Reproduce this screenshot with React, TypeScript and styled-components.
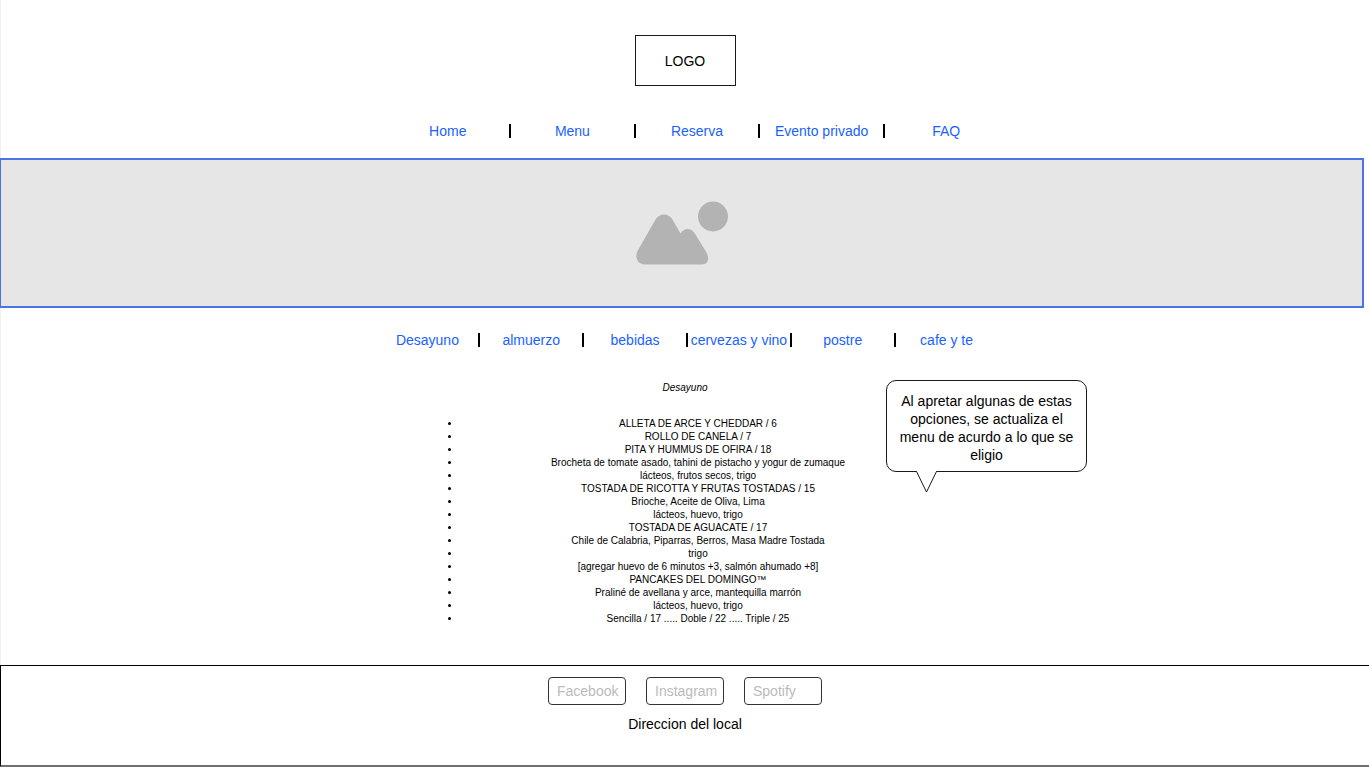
import React from "react";
import styled, { createGlobalStyle } from "styled-components";

const GlobalStyle = createGlobalStyle`
  *, *::before, *::after { box-sizing: border-box; }
  body {
    margin: 0;
    background: #ffffff;
    color: #000000;
    font-family: "Liberation Sans", Arial, sans-serif;
    font-size: 14px;
  }
`;

const Page = styled.div`
  display: flex;
  flex-direction: column;
  min-width: 720px;
`;

const Body = styled.div`
  display: flex;
  flex-direction: column;
  align-items: center;
  border-left: 1px solid #f0f0f0;
`;

const Logo = styled.div`
  display: grid;
  place-items: center;
  width: 101px;
  height: 51px;
  margin: 35px 0 38px;
  border: 1px solid #1a1a1a;
`;

const NavBar = styled.nav<{ $columns: number; $indent: number }>`
  display: grid;
  grid-template-columns: repeat(${(p) => p.$columns}, 1fr);
  width: 623px;
  margin-left: ${(p) => p.$indent}px;
`;

const NavLink = styled.a`
  border-left: 2px solid #000000;
  color: #1a62ff;
  line-height: 14px;
  text-align: center;
  text-decoration: none;
  white-space: nowrap;

  &:first-child {
    border-left-color: transparent;
  }
`;

const Hero = styled.div`
  align-self: stretch;
  display: grid;
  place-items: center;
  height: 150px;
  margin: 20px 5px 25px -1px;
  border: 2px solid #4a74e2;
  border-left-width: 1px;
  background: #e6e6e6;
`;

const MenuSection = styled.section`
  position: relative;
  width: 500px;
  padding: 34px 0 40px;
`;

const MenuTitle = styled.h1`
  margin: 0 0 23px;
  font-size: 10px;
  font-style: italic;
  font-weight: 400;
  line-height: 13px;
  text-align: center;
`;

const MenuList = styled.ul`
  margin: 0;
  padding: 0 0 0 26px;
  font-size: 10px;
  line-height: 13px;
  text-align: center;
`;

const Bubble = styled.aside`
  position: absolute;
  top: 33px;
  left: 451px;
  width: 201px;
  padding: 11px 10px 7px;
  border: 1px solid #1a1a1a;
  border-radius: 10px;
  background: #ffffff;
  line-height: 18px;
  text-align: center;
`;

const BubbleTail = styled.svg`
  position: absolute;
  top: 100%;
  left: 29px;
  display: block;
  overflow: visible;
`;

const Footer = styled.footer`
  display: flex;
  flex-direction: column;
  align-items: center;
  gap: 10px;
  padding: 11px 0 32px;
  border: 1px solid #000000;
  border-right: 0;
  border-bottom: 2px solid #707070;
`;

const Socials = styled.div`
  display: flex;
  gap: 20px;
`;

const SocialInput = styled.input`
  width: 78px;
  height: 28px;
  padding: 0 5px 0 8px;
  border: 1px solid #333333;
  border-radius: 4px;
  background: #ffffff;
  color: #000000;
  font: inherit;

  &::placeholder {
    color: #bbbbbb;
    opacity: 1;
  }
`;

const Address = styled.address`
  font-style: normal;
  line-height: 18px;
`;

const pages = ["Home", "Menu", "Reserva", "Evento privado", "FAQ"];
const categories = ["Desayuno", "almuerzo", "bebidas", "cervezas y vino", "postre", "cafe y te"];
const dishes = [
  "ALLETA DE ARCE Y CHEDDAR / 6",
  "ROLLO DE CANELA / 7",
  "PITA Y HUMMUS DE OFIRA / 18",
  "Brocheta de tomate asado, tahini de pistacho y yogur de zumaque",
  "lácteos, frutos secos, trigo",
  "TOSTADA DE RICOTTA Y FRUTAS TOSTADAS / 15",
  "Brioche, Aceite de Oliva, Lima",
  "lácteos, huevo, trigo",
  "TOSTADA DE AGUACATE / 17",
  "Chile de Calabria, Piparras, Berros, Masa Madre Tostada",
  "trigo",
  "[agregar huevo de 6 minutos +3, salmón ahumado +8]",
  "PANCAKES DEL DOMINGO™",
  "Praliné de avellana y arce, mantequilla marrón",
  "lácteos, huevo, trigo",
  "Sencilla / 17 ..... Doble / 22 ..... Triple / 25",
];
const socials = ["Facebook", "Instagram", "Spotify"];

function Links({ label, items, indent }: { label: string; items: string[]; indent: number }) {
  return (
    <NavBar aria-label={label} $columns={items.length} $indent={indent}>
      {items.map((item) => (
        <NavLink key={item} href="#">{item}</NavLink>
      ))}
    </NavBar>
  );
}

export default function App() {
  return (
    <Page>
      <GlobalStyle />
      <Body>
        <Logo>LOGO</Logo>
        <Links label="Principal" items={pages} indent={22} />
        <Hero>
          <svg width="92" height="64" viewBox="0 0 92 64" fill="#b3b3b3" aria-hidden="true">
            <circle cx="77" cy="15.5" r="15" />
            <path d="M1.8 49.5L19.5 18.5Q23 13.6 28 13.6T36.5 18.5L44.5 32.5Q47.5 28 51.5 28T58.5 32L70.5 51.5Q72.5 55 72 59Q71 63.5 65 63.5H10Q3 63.5 1 58.5Q-.5 53.5 1.8 49.5Z" />
          </svg>
        </Hero>
        <Links label="Menu" items={categories} indent={2} />
        <MenuSection>
          <MenuTitle>Desayuno</MenuTitle>
          <MenuList>
            {dishes.map((dish, i) => (
              <li key={i}>{dish}</li>
            ))}
          </MenuList>
          <Bubble>
            Al apretar algunas de estas opciones, se actualiza el menu de acurdo a lo que se eligio
            <BubbleTail width="22" height="22" viewBox="0 0 22 22" aria-hidden="true">
              <path d="M1 0H20V2H1Z" fill="#ffffff" />
              <path d="M.5 .5L10.5 21L20.5 .5" fill="#ffffff" stroke="#1a1a1a" />
            </BubbleTail>
          </Bubble>
        </MenuSection>
      </Body>
      <Footer>
        <Socials>
          {socials.map((name) => (
            <SocialInput key={name} aria-label={name} placeholder={name} />
          ))}
        </Socials>
        <Address>Direccion del local</Address>
      </Footer>
    </Page>
  );
}
